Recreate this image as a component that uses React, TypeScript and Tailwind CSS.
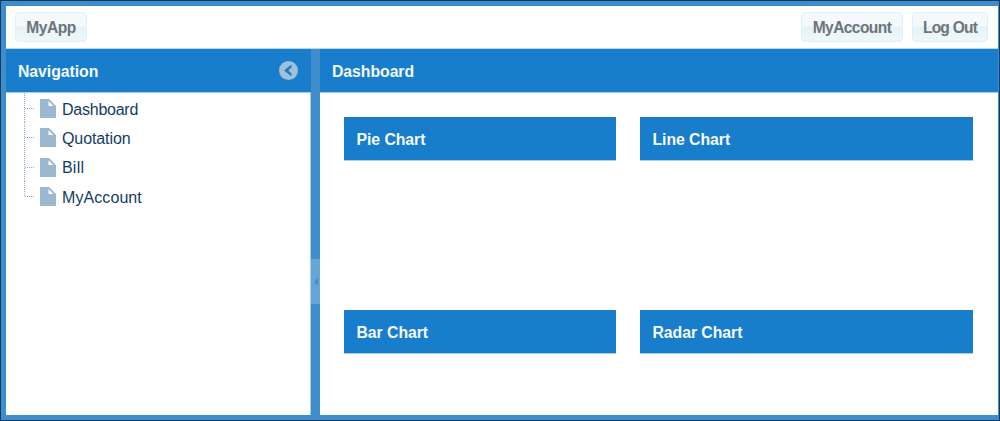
import React from "react";

const navItems = [
  { label: "Dashboard", tracking: "tracking-[-0.24px]" },
  { label: "Quotation", tracking: "tracking-[-0.1px]" },
  { label: "Bill", tracking: "tracking-[0.2px]" },
  { label: "MyAccount", tracking: "tracking-[0.08px]" },
];

function ToolButton({ label, className }: { label: string; className: string }) {
  return (
    <button
      className={`h-[30px] rounded-[4px] border border-[#e0f1f6] bg-linear-to-b from-[#f4fafc] from-45% via-[#e4f3f8] via-50% to-[#eef8fa] pt-px text-center text-[15.6px] font-bold leading-[28px] whitespace-nowrap text-[#6f7478] ${className}`}
    >
      {label}
    </button>
  );
}

function PanelHeader({
  title,
  className = "pl-3",
  children,
}: {
  title: string;
  className?: string;
  children?: React.ReactNode;
}) {
  return (
    <div
      className={`flex h-11 shrink-0 items-center justify-between border-b border-[#a3cdea] bg-[#187dcb] pt-px pr-3 text-[15.8px] font-bold text-[#f4faff] ${className}`}
    >
      <span className="pt-[2px] tracking-[-0.05px]">{title}</span>
      {children}
    </div>
  );
}

function ChartPanel({ title }: { title: string }) {
  return (
    <section>
      <PanelHeader title={title} className="pl-[12.5px]" />
    </section>
  );
}

function CollapseIcon() {
  return (
    <svg width="20" height="20" viewBox="0 0 20 20">
      <circle cx="9.5" cy="9.5" r="9.5" fill="#a2c0d8" />
      <path d="M12.5 3.5 5 9.5l7.5 6v-3L9.3 9.5l3.2-3Z" fill="#187dcb" />
    </svg>
  );
}

function NavRow({ label, tracking, last }: { label: string; tracking: string; last: boolean }) {
  return (
    <li className="flex h-[29.3px] items-center text-base text-[#123d63]">
      <svg className="shrink-0" width="40" height="29.3" viewBox="0 0 40 29.3">
        <path d={last ? "M6.5 0V15" : "M6.5 0V29.3"} stroke="#8caecb" strokeDasharray="1 1" />
        <path d="M7 15.5H17" stroke="#8caecb" strokeDasharray="1 1" />
        <path d="M22 6H31L38 13V25H22Z" fill="#9bb8ce" />
        <path d="M30.5 8.3V13H35.3Z" fill="#fff" />
      </svg>
      <span className={`ml-1 pt-[4px] ${tracking}`}>{label}</span>
    </li>
  );
}

export default function App() {
  return (
    <div className="flex h-[421px] w-[1000px] flex-col border border-[#103b62] bg-[#3f8ecb] pt-[5px] pr-px pb-[5px] pl-[5px] font-['Liberation_Sans',Arial,sans-serif]">
      <header className="flex h-[43px] shrink-0 items-center border-b border-[#b5daf0] bg-white pr-[10px] pl-[9px]">
        <ToolButton label="MyApp" className="w-[72px] tracking-[-0.5px]" />
        <ToolButton label="MyAccount" className="ml-auto w-[102px] tracking-[-0.6px]" />
        <ToolButton label="Log Out" className="ml-[9px] w-[76px] tracking-[-0.8px]" />
      </header>
      <div className="flex min-h-0 flex-1">
        <nav className="flex w-[305px] shrink-0 flex-col bg-white">
          <PanelHeader title="Navigation">
            <CollapseIcon />
          </PanelHeader>
          <ul className="flex-1 border-r border-[#a9cde5] pl-3">
            {navItems.map((item, i) => (
              <NavRow key={item.label} {...item} last={i === navItems.length - 1} />
            ))}
          </ul>
        </nav>
        <div className="flex w-[9px] shrink-0 items-center justify-center pt-[99px]">
          <div className="flex h-[45px] w-[9px] items-center justify-center bg-[#65a6d6]">
            <svg width="6" height="10" viewBox="0 0 6 10">
              <path d="M5 1 1 5l4 4Z" fill="#3f8ecb" />
            </svg>
          </div>
        </div>
        <main className="min-w-0 flex-1 bg-white">
          <PanelHeader title="Dashboard" />
          <div className="grid grid-cols-[272px_333px] grid-rows-[192.5px_auto] gap-x-6 pt-6 pl-6">
            <ChartPanel title="Pie Chart" />
            <ChartPanel title="Line Chart" />
            <ChartPanel title="Bar Chart" />
            <ChartPanel title="Radar Chart" />
          </div>
        </main>
      </div>
    </div>
  );
}
